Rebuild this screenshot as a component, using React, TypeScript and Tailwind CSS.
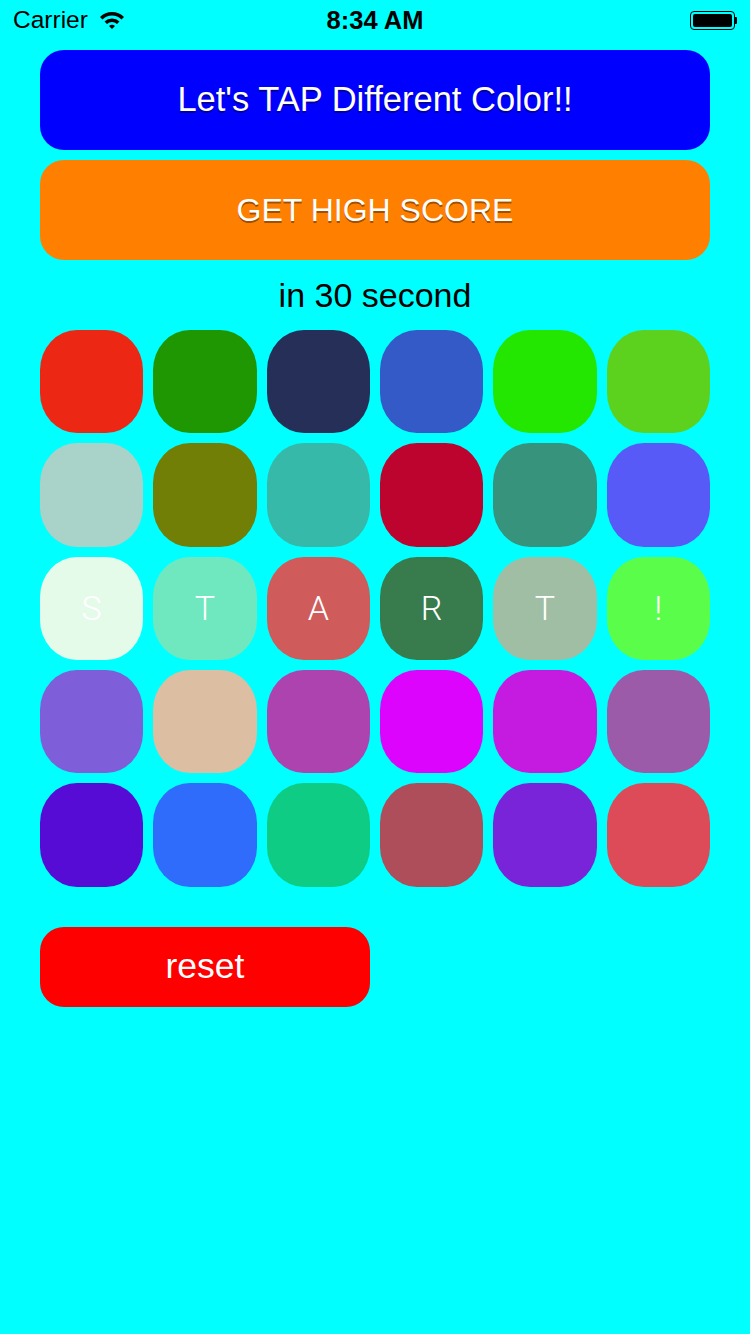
const tiles: { color: string; label?: string }[] = [
  { color: "#EC2815" },
  { color: "#1E9703" },
  { color: "#252F57" },
  { color: "#335AC6" },
  { color: "#23E700" },
  { color: "#5CD21E" },
  { color: "#A9D2C9" },
  { color: "#717F06" },
  { color: "#37B9AA" },
  { color: "#BD042F" },
  { color: "#37937C" },
  { color: "#585AF8" },
  { color: "#E5FBE9", label: "S" },
  { color: "#6FE8BF", label: "T" },
  { color: "#CF5B5B", label: "A" },
  { color: "#387C4E", label: "R" },
  { color: "#A0BEA4", label: "T" },
  { color: "#5BFD4B", label: "!" },
  { color: "#7E5ED9" },
  { color: "#DCBEA2" },
  { color: "#AD43AF" },
  { color: "#DC04FC" },
  { color: "#C51AE0" },
  { color: "#9B5BA8" },
  { color: "#560CD5" },
  { color: "#306CFC" },
  { color: "#0ECC84" },
  { color: "#AD4E5A" },
  { color: "#7A24D9" },
  { color: "#DE4B58" },
];

const StatusBar = () => (
  <div className="flex h-[40px] items-center justify-between px-[13px] text-black">
    <div className="flex w-[150px] items-center gap-[11px] text-[24.5px]">
      <span>Carrier</span>
      <svg width="26" height="20" viewBox="0 0 26 20">
        <path d="M1 7 A17 17 0 0 1 25 7 L22.5 9.5 A13.5 13.5 0 0 0 3.5 9.5 Z" fill="black" />
        <path d="M5.5 11.5 A11 11 0 0 1 20.5 11.5 L18 14 A7.5 7.5 0 0 0 8 14 Z" fill="black" />
        <path d="M10 16 A4.5 4.5 0 0 1 16 16 L13 19 Z" fill="black" />
      </svg>
    </div>
    <div className="text-[25.5px] font-semibold">8:34 AM</div>
    <div className="flex w-[150px] items-center justify-end">
      <div className="flex h-[19px] w-[45px] items-center rounded-[4px] border-[1.5px] border-black p-[2px]">
        <div className="h-full w-full rounded-[2px] bg-black" />
      </div>
      <div className="h-[7px] w-[2px] rounded-r-[1px] bg-black" />
    </div>
  </div>
);

export default function App() {
  return (
    <div className="min-h-[1334px] w-full bg-[#00FFFF] font-['Liberation_Sans',Arial,sans-serif]">
      <StatusBar />
      <main className="flex flex-col px-[40px]">
        <button className="mt-[10px] flex h-[100px] items-center justify-center rounded-[24px] bg-[#0000FF] text-[34.5px] text-white [text-shadow:0_2px_0_rgba(0,0,0,0.4)]">
          Let's TAP Different Color!!
        </button>
        <button className="mt-[10px] flex h-[100px] items-center justify-center rounded-[24px] bg-[#FF8000] text-[32px] text-white [text-shadow:0_2px_0_rgba(0,0,0,0.4)]">
          GET HIGH SCORE
        </button>
        <div className="flex h-[70px] items-center justify-center text-[34px] text-black">
          in 30 second
        </div>
        <div className="grid grid-cols-6 gap-[10px]">
          {tiles.map((tile, index) => (
            <div
              key={index}
              className="flex aspect-square items-center justify-center rounded-[37px/40px] font-['Roboto',sans-serif] text-[34px] font-light text-white"
              style={{ backgroundColor: tile.color }}
            >
              {tile.label}
            </div>
          ))}
        </div>
        <button className="mt-[40px] flex h-[80px] w-[330px] items-center justify-center rounded-[24px] bg-[#FF0000] text-[35.5px] text-white">
          reset
        </button>
      </main>
    </div>
  );
}
